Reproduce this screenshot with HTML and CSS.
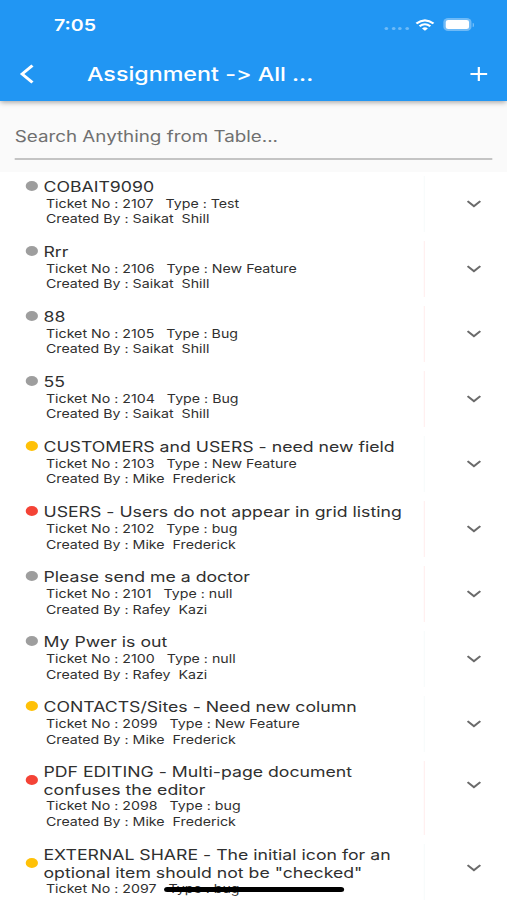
FILE: index.html
```
<!DOCTYPE html>
<html lang="en">
<head>
  <meta charset="UTF-8">
  <title>Assignment</title>
  <meta name="viewport" content="width=device-width, initial-scale=1.0">
  <link rel="stylesheet" href="styles.css">
</head>
<body>
  <svg class="sprite">
    <symbol id="chevron" viewBox="0 0 12 8">
      <path d="M0.8 1.2 L6 6.2 L11.2 1.2" fill="none" stroke="#6b6b6b" stroke-width="1.8"/>
    </symbol>
  </svg>

  <div class="screen">
    <header class="header">
      <div class="status-bar">
        <span class="time">7:05</span>
        <span class="signal"><i></i><i></i><i></i><i></i></span>
        <svg class="wifi" viewBox="0 0 16 12">
          <path d="M1 4.6 Q8 -1.8 15 4.6" fill="none" stroke="#fff" stroke-width="2"/>
          <path d="M3.6 7.3 Q8 3.3 12.4 7.3" fill="none" stroke="#fff" stroke-width="1.9"/>
          <path d="M5.6 9.4 Q8 7.2 10.4 9.4 L8 11.8 Z" fill="#fff"/>
        </svg>
        <span class="battery"><span class="battery-level"></span></span>
        <span class="battery-tip"></span>
      </div>
      <nav class="app-bar">
        <svg class="back" viewBox="0 0 12 20">
          <path d="M10.5 1.5 L2 10 L10.5 18.5" fill="none" stroke="#fff" stroke-width="2.5"/>
        </svg>
        <h1>Assignment -&gt; All ...</h1>
        <svg class="add" viewBox="0 0 14 14">
          <path d="M7 0 V14 M0 7 H14" stroke="#fff" stroke-width="1.8"/>
        </svg>
      </nav>
    </header>

    <div class="search">
      <div class="search-field">Search Anything from Table...</div>
    </div>

    <main class="list">
      <article class="row">
        <span class="dot"></span>
        <div class="info">
          <h2>COBAIT9090</h2>
          <p>Ticket No : 2107   Type : Test</p>
          <p>Created By : Saikat  Shill</p>
        </div>
        <div class="toggle"><svg><use href="#chevron"/></svg></div>
      </article>
      <article class="row">
        <span class="dot"></span>
        <div class="info">
          <h2>Rrr</h2>
          <p>Ticket No : 2106   Type : New Feature</p>
          <p>Created By : Saikat  Shill</p>
        </div>
        <div class="toggle pink"><svg><use href="#chevron"/></svg></div>
      </article>
      <article class="row">
        <span class="dot"></span>
        <div class="info">
          <h2>88</h2>
          <p>Ticket No : 2105   Type : Bug</p>
          <p>Created By : Saikat  Shill</p>
        </div>
        <div class="toggle pink"><svg><use href="#chevron"/></svg></div>
      </article>
      <article class="row">
        <span class="dot"></span>
        <div class="info">
          <h2>55</h2>
          <p>Ticket No : 2104   Type : Bug</p>
          <p>Created By : Saikat  Shill</p>
        </div>
        <div class="toggle pink"><svg><use href="#chevron"/></svg></div>
      </article>
      <article class="row">
        <span class="dot amber"></span>
        <div class="info">
          <h2>CUSTOMERS and USERS - need new field</h2>
          <p>Ticket No : 2103   Type : New Feature</p>
          <p>Created By : Mike  Frederick</p>
        </div>
        <div class="toggle"><svg><use href="#chevron"/></svg></div>
      </article>
      <article class="row">
        <span class="dot red"></span>
        <div class="info">
          <h2>USERS - Users do not appear in grid listing</h2>
          <p>Ticket No : 2102   Type : bug</p>
          <p>Created By : Mike  Frederick</p>
        </div>
        <div class="toggle pink"><svg><use href="#chevron"/></svg></div>
      </article>
      <article class="row">
        <span class="dot"></span>
        <div class="info">
          <h2>Please send me a doctor</h2>
          <p>Ticket No : 2101   Type : null</p>
          <p>Created By : Rafey  Kazi</p>
        </div>
        <div class="toggle pink"><svg><use href="#chevron"/></svg></div>
      </article>
      <article class="row">
        <span class="dot"></span>
        <div class="info">
          <h2>My Pwer is out</h2>
          <p>Ticket No : 2100   Type : null</p>
          <p>Created By : Rafey  Kazi</p>
        </div>
        <div class="toggle"><svg><use href="#chevron"/></svg></div>
      </article>
      <article class="row">
        <span class="dot amber"></span>
        <div class="info">
          <h2>CONTACTS/Sites - Need new column</h2>
          <p>Ticket No : 2099   Type : New Feature</p>
          <p>Created By : Mike  Frederick</p>
        </div>
        <div class="toggle"><svg><use href="#chevron"/></svg></div>
      </article>
      <article class="row tall">
        <span class="dot red"></span>
        <div class="info">
          <h2>PDF EDITING - Multi-page document<br>confuses the editor</h2>
          <p>Ticket No : 2098   Type : bug</p>
          <p>Created By : Mike  Frederick</p>
        </div>
        <div class="toggle pink"><svg><use href="#chevron"/></svg></div>
      </article>
      <article class="row tall">
        <span class="dot amber"></span>
        <div class="info">
          <h2>EXTERNAL SHARE - The initial icon for an<br>optional item should not be "checked"</h2>
          <p>Ticket No : 2097   Type : bug</p>
        </div>
        <div class="toggle"><svg><use href="#chevron"/></svg></div>
      </article>
    </main>

    <div class="home-indicator"></div>
  </div>
</body>
</html>
```
FILE: styles.css
```
* {
  box-sizing: border-box;
}

body {
  margin: 0;
  width: 507px;
  height: 900px;
  overflow: hidden;
  background: #fff;
  font-family: Inter, "Liberation Sans", sans-serif;
  font-feature-settings: "calt" 0;
  color: #303030;
}

.sprite {
  display: none;
}

.screen {
  position: relative;
  width: 414px;
  height: 900px;
  overflow: hidden;
  transform: scaleX(1.22464);
  transform-origin: 0 0;
}

.header {
  position: relative;
  height: 101px;
  background: #2196f3;
  color: #fff;
  box-shadow: 0 1px 5px rgba(0, 0, 0, 0.4);
}

.status-bar {
  display: flex;
  align-items: center;
  height: 49px;
  padding: 0 27px 0 44px;
}

.time {
  flex: 1;
  font-size: 16px;
  font-weight: 600;
  font-feature-settings: "calt" 1;
}

.signal {
  display: flex;
  gap: 2.5px;
  margin: 8px 5px 0 0;
}

.signal i {
  width: 3px;
  height: 3px;
  border-radius: 50%;
  background: rgba(255, 255, 255, 0.35);
}

.wifi {
  width: 16px;
  height: 12px;
  margin-right: 7px;
}

.battery {
  width: 23px;
  height: 13px;
  padding: 2px;
  border-radius: 4px;
  background: rgba(255, 255, 255, 0.35);
}

.battery-level {
  display: block;
  height: 9px;
  border-radius: 2px;
  background: #fff;
}

.battery-tip {
  width: 1.5px;
  height: 4px;
  margin-left: 1px;
  border-radius: 0 2px 2px 0;
  background: rgba(255, 255, 255, 0.4);
}

.app-bar {
  display: flex;
  align-items: center;
  height: 50px;
  padding: 0 16px;
}

.back {
  width: 12px;
  height: 20px;
}

.app-bar h1 {
  flex: 1;
  margin: 0 0 0 43px;
  font-size: 19px;
  font-weight: 500;
}

.add {
  width: 14px;
  height: 14px;
}

.search {
  height: 71px;
  padding: 0 12px;
  background: #fafafa;
}

.search-field {
  height: 59px;
  border-bottom: 2px solid #c4c4c4;
  font-size: 15.35px;
  line-height: 72px;
  color: #707070;
}

.row {
  display: flex;
  height: 65.05px;
  padding-left: 21px;
}

.row.tall {
  height: 82.6px;
}

.dot {
  width: 10px;
  height: 10px;
  margin-top: 8.5px;
  border-radius: 50%;
  background: #9e9e9e;
}

.tall .dot {
  margin-top: 17.5px;
}

.dot.amber {
  background: #ffc107;
}

.dot.red {
  background: #f44336;
}

.info {
  flex: 1;
  padding: 6px 0 0 4.5px;
}

.info h2 {
  margin: 0 0 1.2px;
  font-size: 14.45px;
  font-weight: 400;
  line-height: 17.5px;
  white-space: nowrap;
}

.info p {
  margin: 0 0 0 2px;
  font-size: 11.6px;
  line-height: 15.6px;
  white-space: pre;
}

.tall h2 {
  margin-bottom: 0.6px;
}

.toggle {
  width: 68px;
  margin: 4px 0 5px;
  padding: 24px 0 0 33.5px;
  border-left: 1px solid #f8fbfb;
}

.toggle.pink {
  border-left-color: #fff0f0;
}

.toggle svg {
  display: block;
  width: 12px;
  height: 8px;
}

.tall .toggle {
  padding-top: 20px;
}

.home-indicator {
  position: absolute;
  left: 134px;
  bottom: 8px;
  width: 147px;
  height: 5px;
  border-radius: 3px;
  background: #000;
}
```
